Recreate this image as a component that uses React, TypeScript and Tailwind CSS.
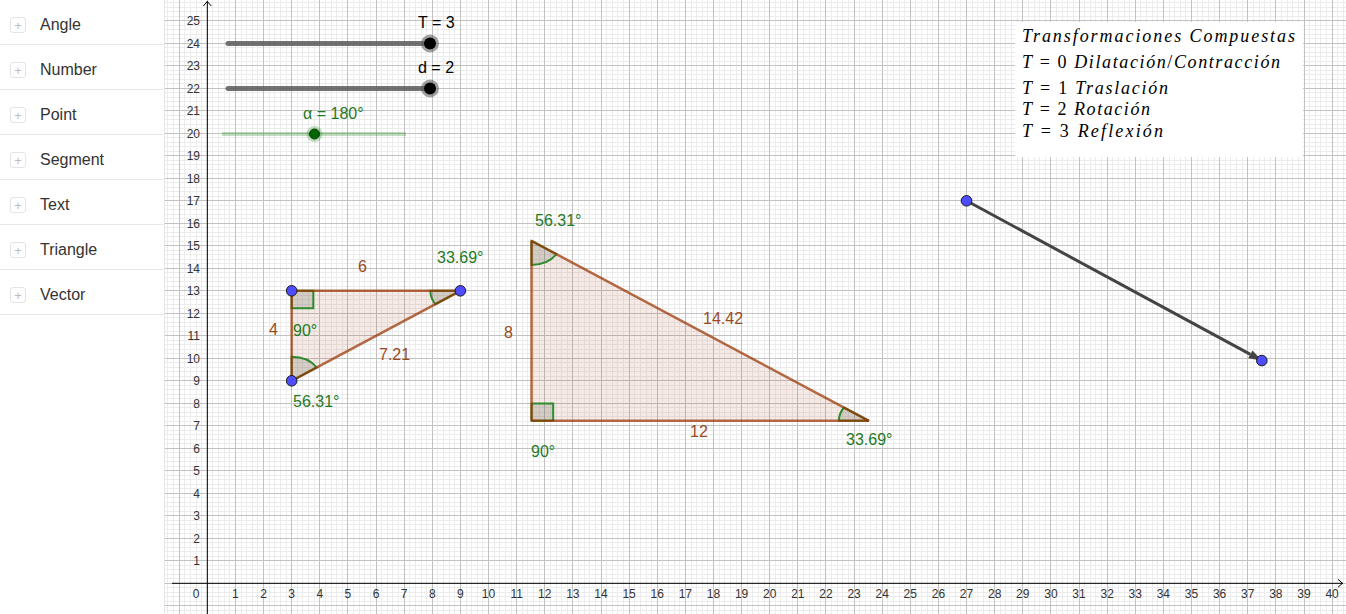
import React from 'react';

const OX = 207.3;
const OY = 583.3;
const UX = 28.12;
const UY = 22.5;
const LEFT = 165;
const RIGHT = 1346;
const H = 614;

const sx = (x: number) => OX + x * UX;
const sy = (y: number) => OY - y * UY;

type P = [number, number];

const items = ['Angle', 'Number', 'Point', 'Segment', 'Text', 'Triangle', 'Vector'];

const BROWN = '#9a4a1e';
const GREEN = '#1f7a1f';

function gridPath(step: number, skipMajor: boolean) {
  let d = '';
  for (let k = -40; k <= 1200; k++) {
    if (skipMajor && k % 5 === 0) continue;
    const x = OX + (k * UX) / step;
    if (x < LEFT || x > RIGHT) continue;
    d += `M${x.toFixed(1)} 0V${H}`;
  }
  for (let k = -40; k <= 1200; k++) {
    if (skipMajor && k % 5 === 0) continue;
    const y = OY - (k * UY) / step;
    if (y < 0 || y > H) continue;
    d += `M${LEFT} ${y.toFixed(1)}H${RIGHT}`;
  }
  return d;
}

function Sector({ v, a, b, r = 1.07 }: { v: P; a: P; b: P; r?: number }) {
  const dir = (p: P) => {
    const dx = p[0] - v[0];
    const dy = p[1] - v[1];
    const l = Math.hypot(dx, dy);
    return [dx / l, dy / l];
  };
  const d1 = dir(a);
  const d2 = dir(b);
  const V = [sx(v[0]), sy(v[1])];
  const s1 = [sx(v[0] + d1[0] * r), sy(v[1] + d1[1] * r)];
  const s2 = [sx(v[0] + d2[0] * r), sy(v[1] + d2[1] * r)];
  const cross = (s1[0] - V[0]) * (s2[1] - V[1]) - (s1[1] - V[1]) * (s2[0] - V[0]);
  const sweep = cross > 0 ? 1 : 0;
  const d = `M${V[0]} ${V[1]}L${s1[0]} ${s1[1]}A${r * UX} ${r * UY} 0 0 ${sweep} ${s2[0]} ${s2[1]}Z`;
  return <path d={d} fill="#5f6a5a" fillOpacity={0.22} stroke="#2e8b2e" strokeWidth={2} />;
}

function RightAngle({ v, a, b, s = 0.77 }: { v: P; a: P; b: P; s?: number }) {
  const dir = (p: P) => {
    const dx = p[0] - v[0];
    const dy = p[1] - v[1];
    const l = Math.hypot(dx, dy);
    return [(dx / l) * s, (dy / l) * s];
  };
  const d1 = dir(a);
  const d2 = dir(b);
  const pts: P[] = [v, [v[0] + d1[0], v[1] + d1[1]], [v[0] + d1[0] + d2[0], v[1] + d1[1] + d2[1]], [v[0] + d2[0], v[1] + d2[1]]];
  return (
    <polygon
      points={pts.map((p) => `${sx(p[0])},${sy(p[1])}`).join(' ')}
      fill="#5f6a5a"
      fillOpacity={0.22}
      stroke="#2e8b2e"
      strokeWidth={2}
    />
  );
}

function Triangle({ pts }: { pts: P[] }) {
  const sp = pts.map((p) => `${sx(p[0])},${sy(p[1])}`).join(' ');
  return <polygon points={sp} fill="#993300" fillOpacity={0.1} stroke="none" />;
}

function Edges({ pts }: { pts: P[] }) {
  return (
    <g stroke="#993300" strokeOpacity={0.72} strokeWidth={2.5}>
      {pts.map((p, i) => {
        const q = pts[(i + 1) % pts.length];
        return <line key={i} x1={sx(p[0])} y1={sy(p[1])} x2={sx(q[0])} y2={sy(q[1])} />;
      })}
    </g>
  );
}

function Dot({ p }: { p: P }) {
  return <circle cx={sx(p[0])} cy={sy(p[1])} r={5.3} fill="#4d4dff" stroke="#1a1a1a" strokeWidth={1} />;
}

function Label({ x, y, c, t }: { x: number; y: number; c: string; t: string }) {
  return (
    <text x={x} y={y} fill={c} fontSize={16}>
      {t}
    </text>
  );
}

function Slider({ x1, x2, y, knob, label, lx, ly, green }: { x1: number; x2: number; y: number; knob: number; label: string; lx: number; ly: number; green?: boolean }) {
  if (green) {
    return (
      <g>
        <line x1={x1} y1={y} x2={x2} y2={y} stroke="#007f00" strokeOpacity={0.25} strokeWidth={4} />
        <circle cx={knob} cy={y} r={8} fill="#007f00" fillOpacity={0.25} />
        <circle cx={knob} cy={y} r={5} fill="#006400" stroke="#0a3d0a" strokeWidth={1} />
        <text x={lx} y={ly} fill="#1f7a1f" fontSize={16}>
          {label}
        </text>
      </g>
    );
  }
  return (
    <g>
      <line x1={x1} y1={y} x2={x2} y2={y} stroke="#5a5a5a" strokeOpacity={0.85} strokeWidth={5} strokeLinecap="round" />
      <circle cx={knob} cy={y} r={9} fill="#555" fillOpacity={0.55} />
      <circle cx={knob} cy={y} r={6} fill="#000" />
      <text x={lx} y={ly} fill="#000" fontSize={16}>
        {label}
      </text>
    </g>
  );
}

function Graphics() {
  const t1: P[] = [
    [3, 13],
    [9, 13],
    [3, 9],
  ];
  const t2: P[] = [
    [11.53, 7.22],
    [23.53, 7.22],
    [11.53, 15.22],
  ];
  const vs: P = [27, 17];
  const ve: P = [37.5, 9.9];
  const vx1 = sx(vs[0]);
  const vy1 = sy(vs[1]);
  const vx2 = sx(ve[0]);
  const vy2 = sy(ve[1]);
  const len = Math.hypot(vx2 - vx1, vy2 - vy1);
  const ux = (vx2 - vx1) / len;
  const uy = (vy2 - vy1) / len;
  const bx = vx2 - ux * 13;
  const by = vy2 - uy * 13;
  const arrow = `${vx2},${vy2} ${bx - uy * 4.5},${by + ux * 4.5} ${bx + uy * 4.5},${by - ux * 4.5}`;

  const yTicks = Array.from({ length: 25 }, (_, i) => i + 1);
  const xTicks = Array.from({ length: 40 }, (_, i) => i + 1);

  return (
    <svg
      width={RIGHT - LEFT}
      height={H}
      viewBox={`${LEFT} 0 ${RIGHT - LEFT} ${H}`}
      className="block"
      style={{ fontFamily: '"Liberation Sans", Arial, sans-serif' }}
    >
      <rect x={LEFT} y={0} width={RIGHT - LEFT} height={H} fill="#fff" />
      <path d={gridPath(5, true)} stroke="#ececec" strokeWidth={1} shapeRendering="crispEdges" />
      <path d={gridPath(1, false)} stroke="#c2c2c2" strokeWidth={1} shapeRendering="crispEdges" />

      {/* axes */}
      <g stroke="#000" strokeWidth={1} fill="none">
        <line x1={OX} y1={1} x2={OX} y2={H} />
        <line x1={LEFT + 7} y1={OY} x2={RIGHT - 3} y2={OY} />
        <polyline points={`${OX - 4},${6} ${OX},${1.5} ${OX + 4},${6}`} />
        <polyline points={`${RIGHT - 8},${OY - 4} ${RIGHT - 3.5},${OY} ${RIGHT - 8},${OY + 4}`} />
      </g>
      <g fill="#333" fontSize={12}>
        {yTicks.map((n) => (
          <text key={n} x={200} y={sy(n) + 4.3} textAnchor="end">
            {n}
          </text>
        ))}
        {xTicks.map((n) => (
          <text key={n} x={sx(n)} y={598} textAnchor="middle">
            {n}
          </text>
        ))}
        <text x={196} y={598} textAnchor="middle">
          0
        </text>
      </g>

      {/* sliders */}
      <Slider x1={228} x2={430} y={43.5} knob={430} label="T = 3" lx={418} ly={28} />
      <Slider x1={228} x2={430} y={88.5} knob={430} label="d = 2" lx={418} ly={73} />
      <Slider x1={222} x2={406} y={134} knob={314.5} label="α = 180°" lx={303} ly={119} green />

      {/* small triangle */}
      <Triangle pts={t1} />
      <RightAngle v={t1[0]} a={t1[1]} b={t1[2]} />
      <Sector v={t1[1]} a={t1[0]} b={t1[2]} />
      <Sector v={t1[2]} a={t1[0]} b={t1[1]} />
      <Edges pts={t1} />

      {/* big triangle */}
      <Triangle pts={t2} />
      <RightAngle v={t2[0]} a={t2[1]} b={t2[2]} />
      <Sector v={t2[1]} a={t2[0]} b={t2[2]} />
      <Sector v={t2[2]} a={t2[0]} b={t2[1]} />
      <Edges pts={t2} />

      {t1.map((p, i) => (
        <Dot key={i} p={p} />
      ))}

      {/* vector */}
      <line x1={vx1} y1={vy1} x2={bx} y2={by} stroke="#444" strokeWidth={3} />
      <polygon points={arrow} fill="#444" />
      <Dot p={vs} />
      <Dot p={ve} />

      {/* labels */}
      <Label x={358} y={272} c={BROWN} t="6" />
      <Label x={269} y={335} c={BROWN} t="4" />
      <Label x={379} y={360} c={BROWN} t="7.21" />
      <Label x={293} y={336} c={GREEN} t="90°" />
      <Label x={437} y={263} c={GREEN} t="33.69°" />
      <Label x={293} y={407} c={GREEN} t="56.31°" />

      <Label x={535} y={226} c={GREEN} t="56.31°" />
      <Label x={504} y={338} c={BROWN} t="8" />
      <Label x={703} y={324} c={BROWN} t="14.42" />
      <Label x={690} y={437} c={BROWN} t="12" />
      <Label x={531} y={457} c={GREEN} t="90°" />
      <Label x={846} y={445} c={GREEN} t="33.69°" />

      {/* text box */}
      <rect x={1015} y={22} width={288} height={135} fill="#fff" />
      <g fill="#000" fontSize={18} style={{ fontFamily: '"Liberation Serif", "Times New Roman", serif' }}>
        <text x={1022} y={42} textLength={273} lengthAdjust="spacing" fontStyle="italic">
          Transformaciones Compuestas
        </text>
        <text x={1022} y={68} textLength={258} lengthAdjust="spacing">
          <tspan fontStyle="italic">T</tspan> = 0 <tspan fontStyle="italic">Dilatación</tspan>/<tspan fontStyle="italic">Contracción</tspan>
        </text>
        <text x={1022} y={94} textLength={146} lengthAdjust="spacing">
          <tspan fontStyle="italic">T</tspan> = 1 <tspan fontStyle="italic">Traslación</tspan>
        </text>
        <text x={1022} y={115} textLength={128} lengthAdjust="spacing">
          <tspan fontStyle="italic">T</tspan> = 2 <tspan fontStyle="italic">Rotación</tspan>
        </text>
        <text x={1022} y={137} textLength={141} lengthAdjust="spacing">
          <tspan fontStyle="italic">T</tspan> = 3 <tspan fontStyle="italic">Reflexión</tspan>
        </text>
      </g>
    </svg>
  );
}

export default function App() {
  return (
    <div className="flex h-[614px] w-[1346px] overflow-hidden bg-white font-['Liberation_Sans',Arial,sans-serif]">
      <aside className="w-[165px] shrink-0 border-r border-[#ece4de] bg-white">
        {items.map((name) => (
          <div key={name} className="flex h-[45px] items-center border-b border-[#e8e8e8] pl-[10px] pt-[6px]">
            <span className="flex h-4 w-4 items-center justify-center rounded-[3px] border border-[#e4e4e4] text-[13px] leading-none text-[#bdbdbd]">
              +
            </span>
            <span className="ml-[14px] text-base text-[#333]">{name}</span>
          </div>
        ))}
      </aside>
      <main className="relative flex-1">
        <Graphics />
      </main>
    </div>
  );
}
